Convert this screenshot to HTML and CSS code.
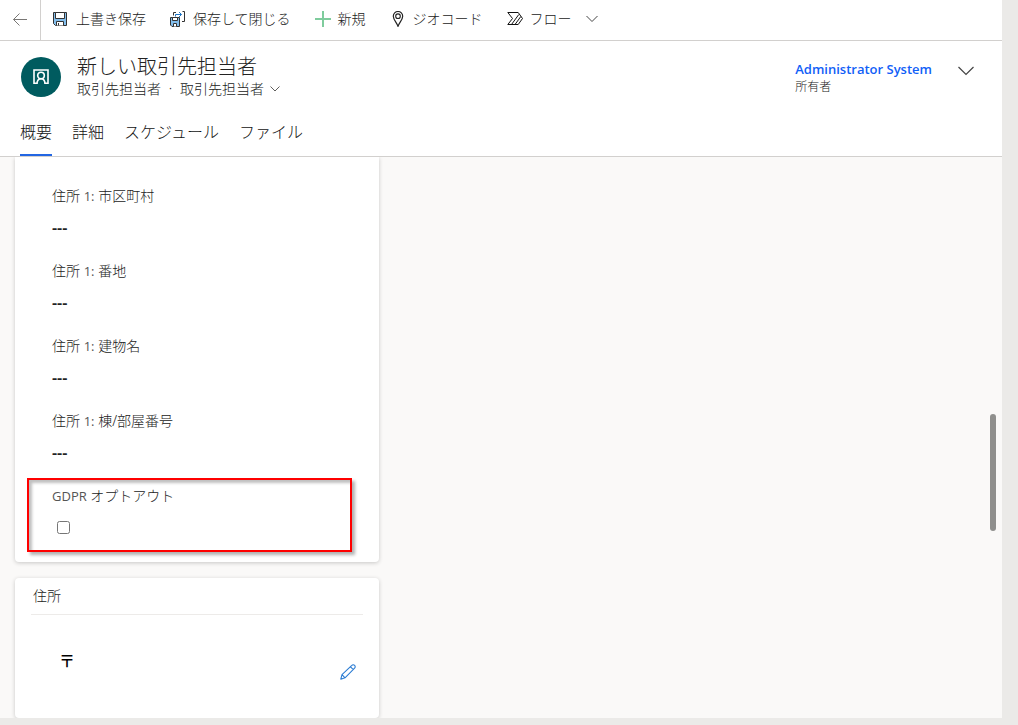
FILE: index.html
```html
<!DOCTYPE html>
<html lang="ja">
<head>
<meta charset="utf-8">
<meta name="viewport" content="width=device-width, initial-scale=1">
<title>新しい取引先担当者</title>
<link rel="stylesheet" href="styles.css">
</head>
<body>
<div class="app">
  <nav class="toolbar" aria-label="コマンド">
    <button class="back" type="button" aria-label="戻る">
      <svg class="icon" viewBox="0 0 16 16"><path d="M1.500 7.500H15M7.500 1.500L1.500 7.500l6 6" fill="none" stroke="#797775"/></svg>
    </button>
    <div class="commands">
      <button class="command" type="button">
        <svg class="icon" viewBox="0 0 16 16"><path d="M.5 1.500h13v13H2.500l-2-2z" fill="#83beec" stroke="#333"/><path d="M2.500 1.500h9v6h-9z" fill="#fff" stroke="#333"/><path d="M3.500 14.500v-4h7v4" fill="#fff" stroke="#333"/><path d="M5.500 12v2.500" stroke="#333"/></svg>
        上書き保存
      </button>
      <button class="command" type="button">
        <svg class="icon" viewBox="0 0 16 16"><path d="M.5 6.500h9v9H2l-1.500-1.500z" fill="#83beec" stroke="#333"/><path d="M2.500 6.500h5v3h-5zM3.500 15.500v-3h3v3" fill="#fff" stroke="#333"/><path d="M3.500 4.500v-3H6M12.500 .5h2v10H12" fill="none" stroke="#333"/><path d="M5.500 5.500v-2H11.500M9 1l2.500 2.500L9 6" fill="none" stroke="#1c74c4"/></svg>
        保存して閉じる
      </button>
      <button class="command" type="button">
        <svg class="icon" viewBox="0 0 16 16"><path d="M8 0v16M0 8h16" stroke="#7fcc9d" stroke-width="2"/></svg>
        新規
      </button>
      <button class="command" type="button">
        <svg class="icon" viewBox="0 0 16 16"><path d="M8 15.300C7 12 3.300 8.500 3.300 5.200a4.700 4.700 0 0 1 9.400 0C12.700 8.500 9 12 8 15.300z" fill="none" stroke="#222" stroke-width="1.200"/><circle cx="8" cy="5.200" r="2.300" fill="none" stroke="#222" stroke-width="1.100"/></svg>
        ジオコード
      </button>
      <button class="command" type="button">
        <svg class="icon" viewBox="0 0 16 16"><path d="M.8 1.500h10.400L15.500 7.500l-4.300 6H.8L5.500 7.500zM4.500 13.500L11.800 3.500M8 13.500L13.800 5.500" fill="none" stroke="#111" stroke-linejoin="round"/></svg>
        フロー
        <svg class="chevron" viewBox="0 0 12 8"><path d="M.5 1L6 6.500 11.500 1" fill="none" stroke="#444"/></svg>
      </button>
    </div>
  </nav>

  <header class="record">
    <div class="identity">
      <div class="avatar">
        <svg class="icon" viewBox="0 0 16 16"><path d="M4 14.300H1V1h14v13.300h-3" fill="none" stroke="#fff" stroke-width="1.600"/><circle cx="8" cy="6.500" r="3.300" fill="none" stroke="#fff" stroke-width="1.600"/><path d="M4 15C4 12 5 9.700 8 9.700s4 2.300 4 5.300" fill="none" stroke="#fff" stroke-width="1.600"/></svg>
      </div>
      <div class="names">
        <h1 class="title">新しい取引先担当者</h1>
        <div class="subtitle">
          <span>取引先担当者</span><span class="dot">·</span>
          <button class="form-switch" type="button">取引先担当者
            <svg class="chevron-small" viewBox="0 0 10 6"><path d="M.5 .5L5 5 9.500 .5" fill="none" stroke="#605e5c"/></svg>
          </button>
        </div>
      </div>
      <div class="owner">
        <a class="owner-name" href="#owner">Administrator System</a>
        <span class="owner-label">所有者</span>
      </div>
      <button class="expand" type="button" aria-label="ヘッダーを展開">
        <svg viewBox="0 0 16 10" width="16" height="10"><path d="M.5 1L8 8.500 15.500 1" fill="none" stroke="#444" stroke-width="1.200"/></svg>
      </button>
    </div>
    <div class="tabs" role="tablist">
      <button class="tab tab-active" type="button" role="tab" aria-selected="true">概要</button>
      <button class="tab" type="button" role="tab" aria-selected="false">詳細</button>
      <button class="tab" type="button" role="tab" aria-selected="false">スケジュール</button>
      <button class="tab" type="button" role="tab" aria-selected="false">ファイル</button>
    </div>
  </header>

  <main class="content">
    <div class="column">
      <section class="card card-fields">
        <div class="field"><label for="city">住所 <span class="latin">1:</span> 市区町村</label><input class="value" id="city" type="text" value="---"></div>
        <div class="field"><label for="street">住所 <span class="latin">1:</span> 番地</label><input class="value" id="street" type="text" value="---"></div>
        <div class="field"><label for="building">住所 <span class="latin">1:</span> 建物名</label><input class="value" id="building" type="text" value="---"></div>
        <div class="field"><label for="room">住所 <span class="latin">1:</span> 棟/部屋番号</label><input class="value" id="room" type="text" value="---"></div>
        <div class="field field-marked"><label for="gdpr"><span class="latin">GDPR</span> オプトアウト</label><input class="check" id="gdpr" type="checkbox"></div>
      </section>
      <section class="card card-address">
        <h2 class="card-title">住所</h2>
        <div class="address">
          <span class="postal">〒</span>
          <button class="edit" type="button" aria-label="編集">
            <svg class="icon" viewBox="0 0 16 16"><path d="M.8 15.200l1.200-4.600L11.800 1.300a1.900 1.900 0 0 1 2.800 0c.8.800.8 2 0 2.800L5 13.800zM2 10.600l3 3.200M10.300 2.700l3 2.900" fill="none" stroke="#2b7cd3" stroke-width="1.100" stroke-linejoin="round"/></svg>
          </button>
        </div>
      </section>
    </div>
    <div class="scroll-thumb"></div>
  </main>
</div>
</body>
</html>
```
FILE: styles.css
```css
* {
  box-sizing: border-box;
}

body {
  margin: 0;
  height: 100vh;
  overflow: hidden;
  padding: 0 16px 7px 0;
  background: #ebeae8;
  color: #222;
  font-family: "Noto Sans", "Noto Sans CJK JP", sans-serif;
  font-size: 14px;
  font-weight: 300;
  line-height: 20px;
}

button,
input {
  margin: 0;
  padding: 0;
  border: 0;
  background: none;
  color: inherit;
  font: inherit;
}

svg {
  display: block;
  flex: none;
}

.icon {
  width: 16px;
  height: 16px;
}

.app {
  display: flex;
  flex-direction: column;
  height: 100%;
  background: #faf9f8;
}

.toolbar {
  display: flex;
  flex: none;
  height: 41px;
  border-bottom: 1px solid #d2d0ce;
  background: #fff;
}

.back {
  display: flex;
  align-items: center;
  justify-content: center;
  width: 41px;
  border-right: 1px solid #d2d0ce;
}

.commands {
  display: flex;
  align-items: center;
  gap: 24px;
  padding: 0 0 2px 12px;
}

.command {
  display: flex;
  align-items: center;
  gap: 7px;
  white-space: nowrap;
}

.chevron {
  width: 12px;
  height: 8px;
  margin-left: 7px;
}

.record {
  flex: none;
  padding: 14px 28px 0 20px;
  border-bottom: 1px solid #d2d0ce;
  background: #fff;
}

.identity {
  display: flex;
  align-items: center;
}

.avatar {
  display: flex;
  align-items: center;
  justify-content: center;
  width: 40px;
  height: 40px;
  margin-left: 1px;
  border-radius: 50%;
  background: #005b5f;
}

.names {
  flex: 1;
  padding-left: 16px;
}

.title {
  margin: 0;
  color: #222;
  font-size: 20px;
  font-weight: 300;
  line-height: 24px;
}

.subtitle {
  display: flex;
}

.dot {
  width: 19px;
  text-align: center;
}

.form-switch {
  display: flex;
  align-items: center;
  gap: 6px;
}

.chevron-small {
  width: 10px;
  height: 6px;
}

.owner {
  display: flex;
  flex-direction: column;
}

.owner-name {
  color: #1160f7;
  font-family: "Open Sans", sans-serif;
  font-size: 13px;
  font-weight: 600;
  text-decoration: none;
}

.owner-label {
  font-size: 12px;
  line-height: 16px;
}

.expand {
  margin: 0 0 12px 26px;
}

.tabs {
  display: flex;
  gap: 20px;
  margin-top: 10px;
}

.tab {
  height: 47px;
  border-bottom: 2px solid transparent;
  color: #111;
  font-size: 16px;
}

.tab-active {
  border-bottom-color: #2266e3;
}

.content {
  position: relative;
  display: grid;
  flex: 1;
  grid-template-columns: minmax(0, 364px) 1fr;
  min-height: 0;
  padding-left: 15px;
  overflow: hidden;
}

.column {
  display: flex;
  flex-direction: column;
  gap: 16px;
}

.card {
  border-radius: 4px;
  background: #fff;
  box-shadow: 0 1px 4px rgba(0, 0, 0, 0.2);
}

.card-fields {
  display: flex;
  flex-direction: column;
  gap: 21px;
  padding: 29px 37px 22px;
  border-radius: 0 0 4px 4px;
}

.field {
  display: flex;
  flex-direction: column;
  gap: 12px;
  height: 54px;
}

.latin {
  color: #555;
  font-family: "Open Sans", sans-serif;
  font-size: 13px;
  font-weight: 400;
}

.value {
  width: 100%;
  height: 20px;
  font-size: 16px;
  font-weight: 600;
}

.field-marked {
  position: relative;
}

.field-marked::after {
  content: "";
  position: absolute;
  inset: -8px -10px -12px -25px;
  border: 2px solid #f00;
  box-shadow: 3px 3px 3px rgba(0, 0, 0, 0.3), inset 3px 3px 3px rgba(0, 0, 0, 0.25);
  pointer-events: none;
}

.check {
  width: 13px;
  height: 13px;
  margin: 3px 0 0 5px;
}

.card-address {
  flex: 1;
  padding: 8px 16px;
}

.card-title {
  margin: 0;
  padding: 0 2px 8px;
  border-bottom: 1px solid #edebe9;
  font-size: 14px;
  font-weight: 300;
}

.address {
  display: flex;
  align-items: flex-start;
  justify-content: space-between;
  padding: 36px 7px 0 28px;
}

.postal {
  color: #000;
  font-size: 16px;
  font-weight: 500;
}

.edit {
  margin-top: 13px;
}

.scroll-thumb {
  position: absolute;
  top: 257px;
  right: 6px;
  width: 6px;
  height: 117px;
  border-radius: 3px;
  background: #8f8f8d;
}
```
